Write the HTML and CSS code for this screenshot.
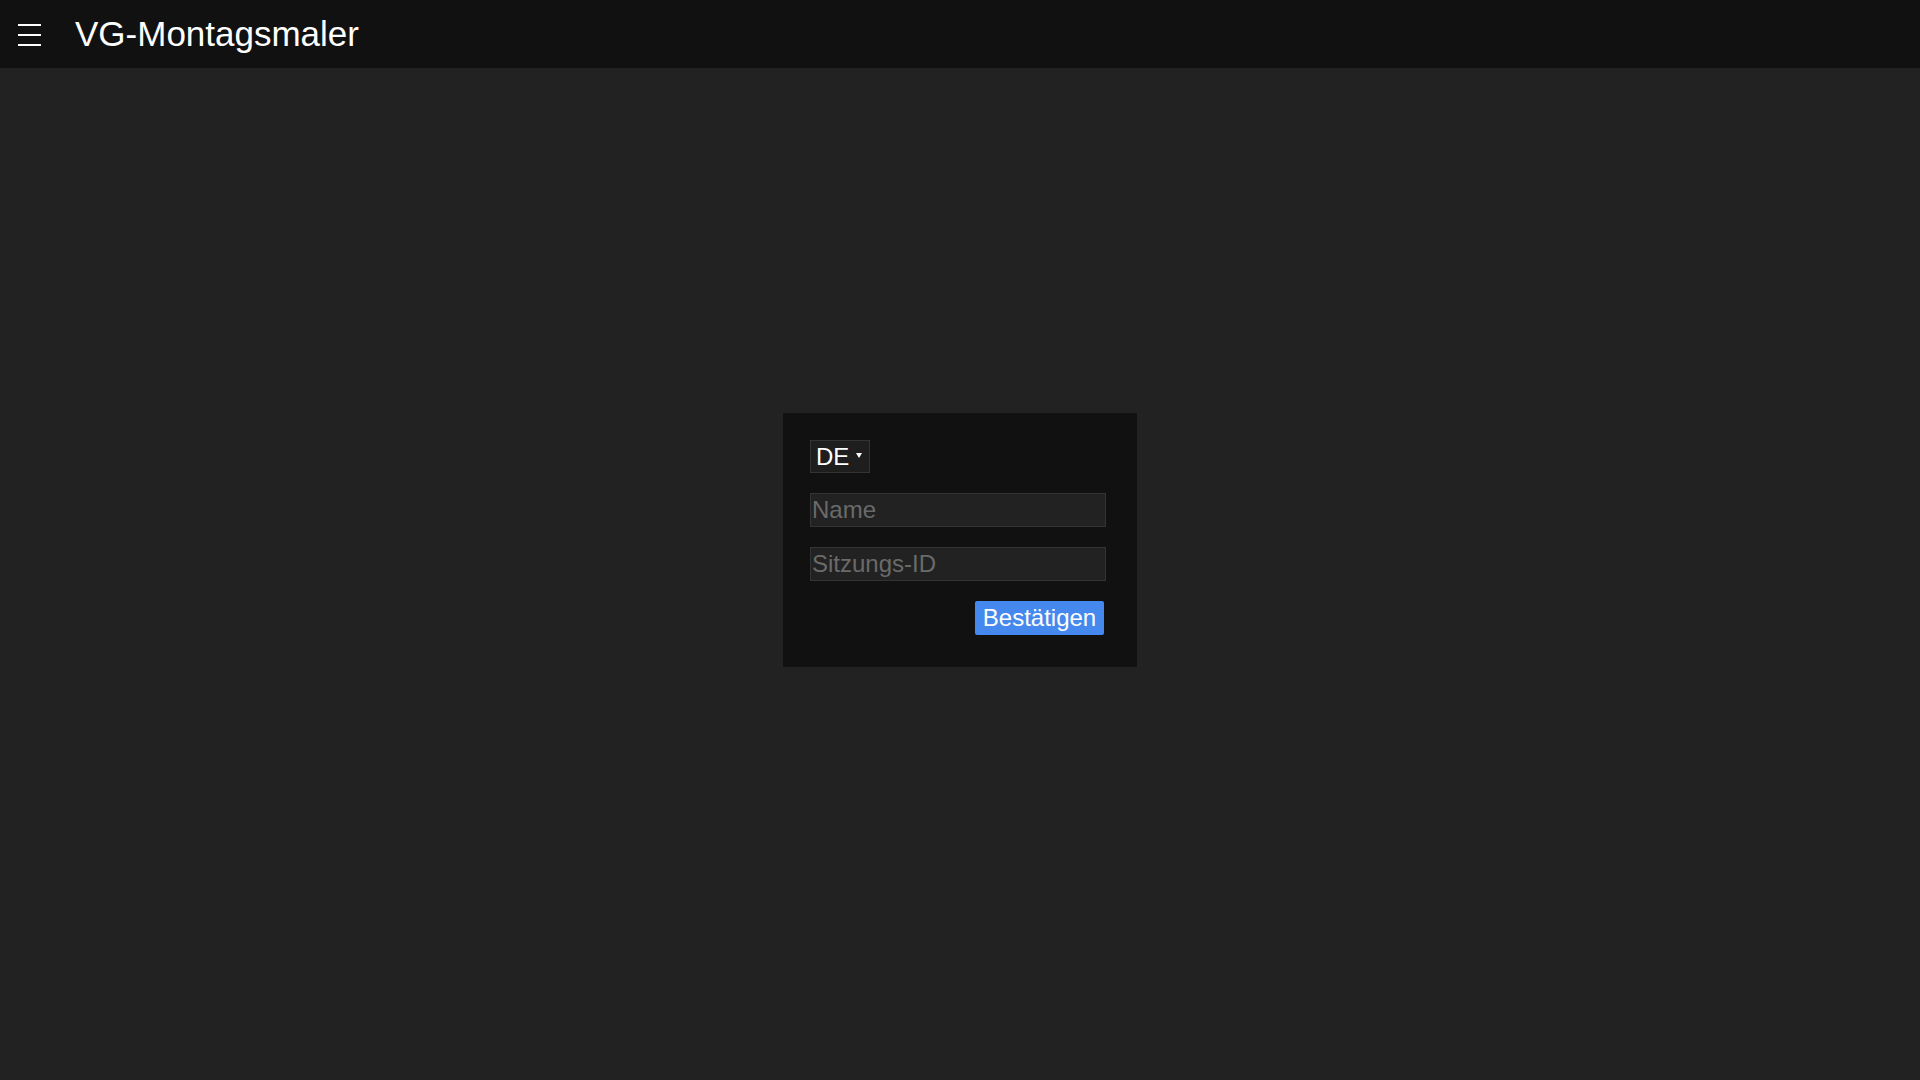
FILE: index.html
```html
<!DOCTYPE html>
<html lang="de">
<head>
<meta charset="utf-8">
<title>VG-Montagsmaler</title>
<link rel="stylesheet" href="styles.css">
</head>
<body>
<header class="topbar">
  <button class="menu-btn" aria-label="Menü">
    <svg width="23" height="22" viewBox="0 0 23 22" fill="#fff">
      <rect x="0" y="0" width="23" height="2"/>
      <rect x="0" y="10" width="23" height="2"/>
      <rect x="0" y="20" width="23" height="2"/>
    </svg>
  </button>
  <h1 class="title">VG-Montagsmaler</h1>
</header>
<main class="stage">
  <form class="card">
    <div class="lang-select">DE <span class="caret"></span></div>
    <input class="field" type="text" placeholder="Name">
    <input class="field" type="text" placeholder="Sitzungs-ID">
    <div class="actions">
      <button type="button" class="confirm">Bestätigen</button>
    </div>
  </form>
</main>
</body>
</html>
```
FILE: styles.css
```css
* { box-sizing: border-box; }
html, body { margin: 0; padding: 0; }
body {
  background: #222222;
  font-family: "Liberation Sans", Arial, sans-serif;
  color: #fff;
  height: 100vh;
  display: flex;
  flex-direction: column;
}
.topbar {
  height: 68px;
  background: #111111;
  display: flex;
  align-items: center;
  flex-shrink: 0;
}
.menu-btn {
  background: none;
  border: 0;
  padding: 0;
  margin-left: 18px;
  width: 23px;
  height: 22px;
  display: flex;
  margin-top: 1px;
}
.title {
  margin: 0 0 0 34px;
  font-size: 35px;
  font-weight: normal;
  line-height: 1;
  padding-bottom: 2px;
}
.stage {
  flex: 1;
  display: flex;
  align-items: center;
  justify-content: center;
  padding-bottom: 68px;
}
.card {
  width: 354px;
  height: 254px;
  background: #111111;
  padding: 27px 31px 32px 27px;
  display: flex;
  flex-direction: column;
  gap: 20px;
}
.lang-select {
  width: 60px;
  height: 33px;
  border: 1px solid #333;
  background: #1e1e1e;
  font-size: 24px;
  line-height: 31px;
  padding-left: 5px;
  display: flex;
  align-items: center;
  color: #fff;
}
.caret {
  width: 0;
  height: 0;
  margin-left: 7px;
  margin-top: -2px;
  border-left: 3px solid transparent;
  border-right: 3px solid transparent;
  border-top: 5px solid #fff;
}
.field {
  width: 296px;
  height: 34px;
  background: #222222;
  border: 1px solid #333333;
  padding: 0 1px;
  font-family: "Liberation Sans", Arial, sans-serif;
  font-size: 24px;
  color: #fff;
  outline: none;
}
.field::placeholder { color: #6a6a6a; }
.actions {
  display: flex;
  justify-content: flex-end;
  width: 294px;
}
.confirm {
  height: 34px;
  width: 129px;
  background: #4589ee;
  border: 0;
  border-radius: 2px;
  color: #fff;
  font-family: "Liberation Sans", Arial, sans-serif;
  font-size: 24px;
  padding: 0;
}
```
